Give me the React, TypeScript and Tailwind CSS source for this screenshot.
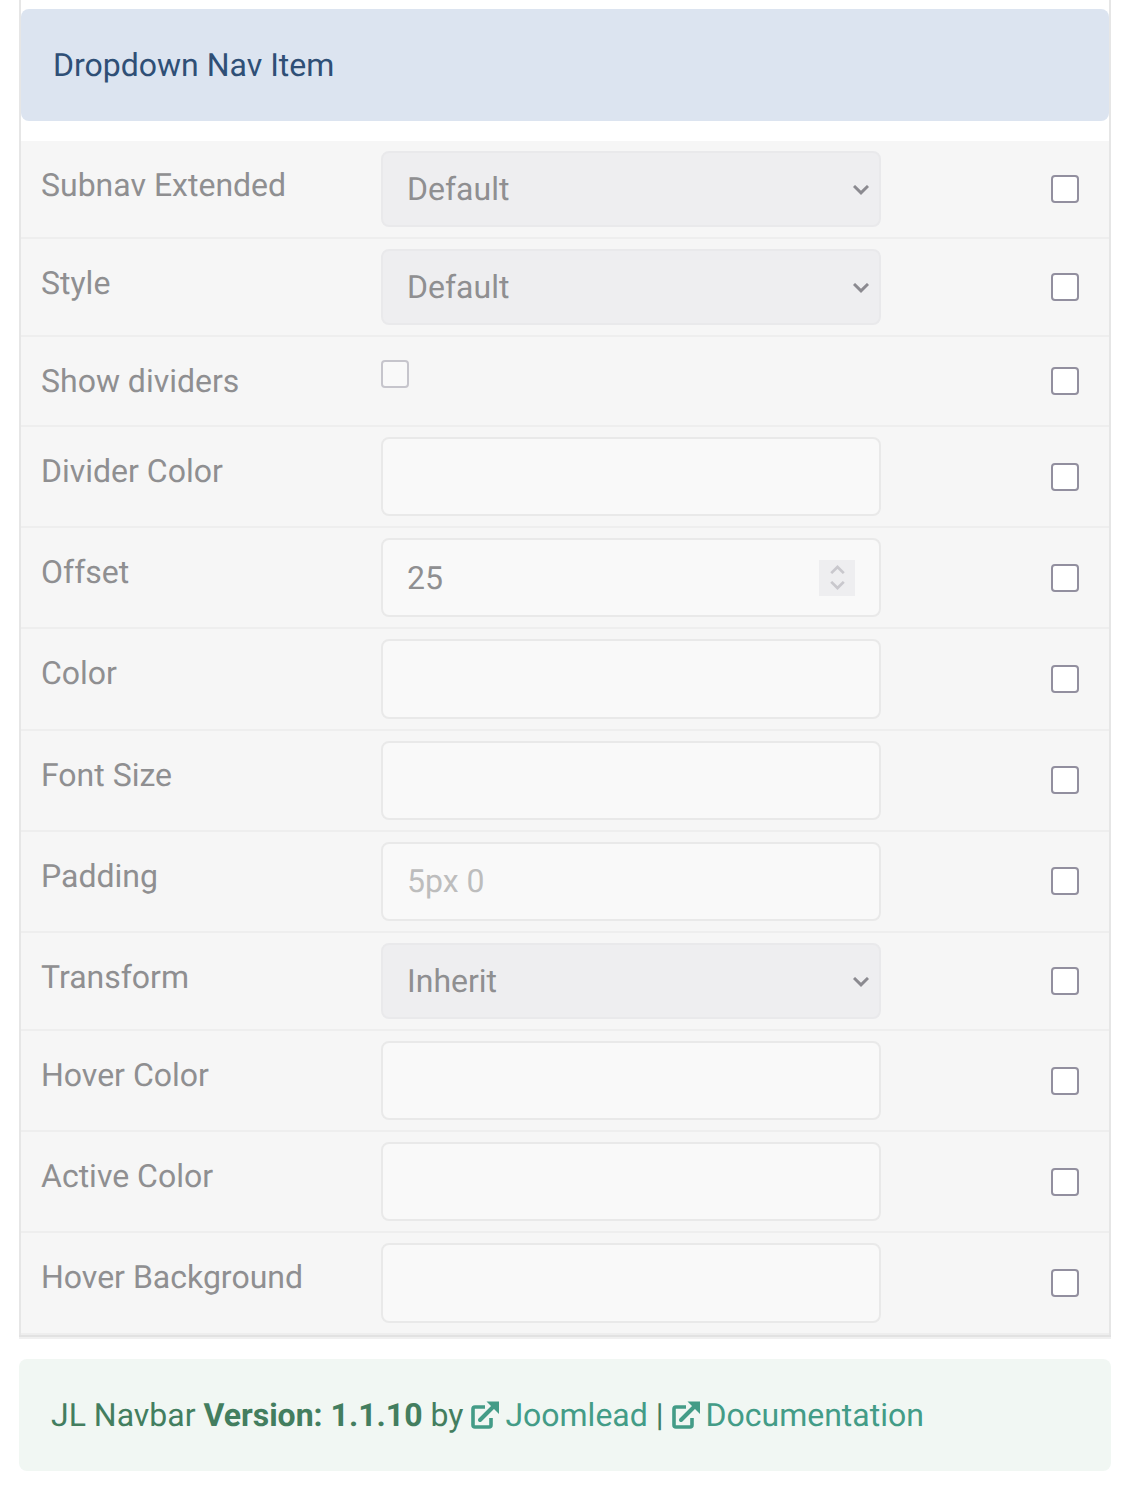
const ROWS = [
  { label: "Subnav Extended", kind: "select", value: "Default", row: "h-[98px]", pt: "pt-[10px]" },
  { label: "Style", kind: "select", value: "Default", row: "h-[98px]", pt: "pt-[10px]" },
  { label: "Show dividers", kind: "check", row: "h-[90px]", pt: "pt-[23px]" },
  { label: "Divider Color", kind: "input", row: "h-[101px]", pt: "pt-[10px]" },
  { label: "Offset", kind: "number", value: "25", row: "h-[101px]", pt: "pt-[10px]" },
  { label: "Color", kind: "input", row: "h-[102px]", pt: "pt-[10px]", tall: true },
  { label: "Font Size", kind: "input", row: "h-[101px]", pt: "pt-[10px]", nudge: true },
  { label: "Padding", kind: "input", placeholder: "5px 0", row: "h-[101px]", pt: "pt-[10px]", nudge: true },
  { label: "Transform", kind: "select", value: "Inherit", row: "h-[98px]", pt: "pt-[10px]" },
  { label: "Hover Color", kind: "input", row: "h-[101px]", pt: "pt-[10px]" },
  { label: "Active Color", kind: "input", row: "h-[101px]", pt: "pt-[10px]" },
  { label: "Hover Background", kind: "input", row: "h-[102px]", pt: "pt-[10px]", tall: true },
];

function Chevron({ up = false, className = "" }: { up?: boolean; className?: string }) {
  return (
    <svg viewBox="0 0 16 10" className={className} fill="none" stroke="currentColor" strokeWidth="3">
      <path d={up ? "M1 9 8 2.2 15 9" : "M1 1 8 7.8 15 1"} />
    </svg>
  );
}

function LinkIcon() {
  return (
    <svg viewBox="0 0 28 28" className="h-[28px] w-[28px] shrink-0" fill="none" stroke="currentColor">
      <path d="M14 6H4a2 2 0 0 0-2 2v16a2 2 0 0 0 2 2h14a2 2 0 0 0 2-2v-7" strokeWidth="3.6" />
      <path d="M9 19 23 5" strokeWidth="4" strokeLinecap="round" />
      <path d="M15.5 0.5h12.5v12.5z" fill="currentColor" stroke="none" />
    </svg>
  );
}

function Control({ item }: { item: (typeof ROWS)[number] }) {
  if (item.kind === "check") {
    return <div className="h-[28px] w-[28px] rounded-[4px] border-2 border-[#c6c5cc] bg-[#f9f9f9]" />;
  }
  if (item.kind === "select") {
    return (
      <div className="flex h-[76px] w-[500px] items-center justify-between rounded-[8px] border-2 border-[#e9e9eb] bg-[#eeeef0] pl-[24px] pr-[10px] text-[#8f8f91]">
        <span>{item.value}</span>
        <Chevron className="mt-[2px] h-[10px] w-[16px] text-[#8b8a90]" />
      </div>
    );
  }
  return (
    <div
      className={`flex w-[500px] items-center justify-between rounded-[8px] border-2 border-[#e9e9e9] bg-[#f9f9f9] pl-[24px] pr-[24px] text-[#8f8f91] ${item.tall ? "h-[80px]" : "h-[79px]"}`}
    >
      {item.placeholder ? (
        <span className="-translate-y-px text-[#bdbdbd]">{item.placeholder}</span>
      ) : (
        <span>{item.value}</span>
      )}
      {item.kind === "number" && (
        <div className="flex h-[36px] w-[36px] flex-col items-center justify-center gap-[7px] bg-[#eeeef0] text-[#c9c8cd]">
          <Chevron up className="h-[9px] w-[15px]" />
          <Chevron className="h-[9px] w-[15px]" />
        </div>
      )}
    </div>
  );
}

export default function App() {
  return (
    <div className="h-[1508px] bg-white font-['Roboto',sans-serif] text-[32px] leading-[44px] [text-rendering:geometricPrecision]">
      <div className="ml-[19px] w-[1092px] border-x-2 border-[#e6e6e6] pt-[9px]">
        <div className="flex h-[112px] items-center rounded-[8px] bg-[#dce4f0] pl-[32px] text-[#2f4f76]">
          Dropdown Nav Item
        </div>
        <div className="mt-[20px] bg-[#f6f6f6]">
          {ROWS.map((item) => (
            <div key={item.label} className={`flex border-b-2 border-[#eeeeee] ${item.row}`}>
              <div className="w-[360px] pl-[20px] pt-[22px] text-[#8f8f91]">{item.label}</div>
              <div className={`w-[500px] ${item.pt}`}>
                <Control item={item} />
              </div>
              <div className="flex flex-1 items-center pl-[170px]">
                <div
                  className={`h-[28px] w-[28px] rounded-[4px] border-2 border-[#928f9f] bg-white ${item.nudge ? "-translate-y-px" : ""}`}
                />
              </div>
            </div>
          ))}
        </div>
      </div>
      <div className="ml-[19px] h-[4px] w-[1092px] border-t-2 border-[#e2e2e2] bg-[#f0f0f0]" />
      <div className="ml-[19px] mt-[20px] flex h-[112px] w-[1092px] items-center rounded-[8px] bg-[#f1f7f3] pl-[32px] text-[#437e5f]">
        <span>JL Navbar&nbsp;</span>
        <strong className="font-bold">Version: 1.1.10</strong>
        <span>&nbsp;by&nbsp;</span>
        <a className="flex items-center gap-[6px] text-[#439c87]">
          <LinkIcon />
          Joomlead
        </a>
        <span>&nbsp;|&nbsp;</span>
        <a className="flex items-center gap-[6px] text-[#439c87]">
          <LinkIcon />
          Documentation
        </a>
      </div>
    </div>
  );
}
